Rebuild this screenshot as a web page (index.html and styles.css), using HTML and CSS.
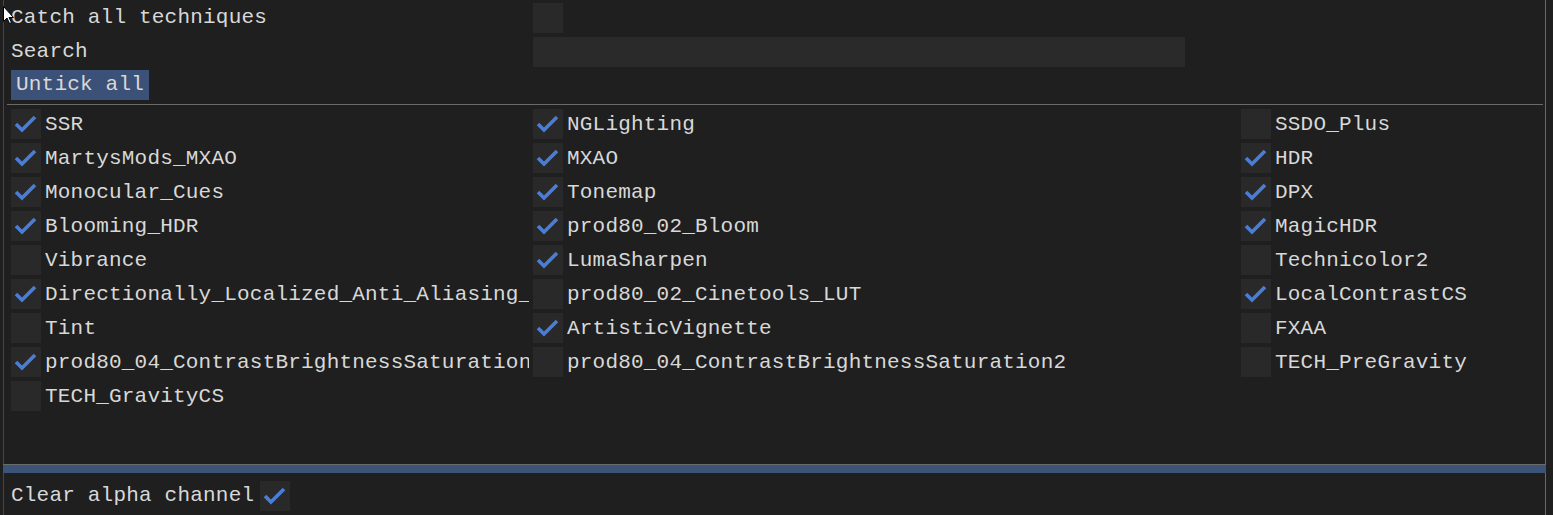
FILE: index.html
```html
<!DOCTYPE html>
<html>
<head>
<meta charset="utf-8">
<link rel="stylesheet" href="styles.css">
</head>
<body>
<div class="window">
  <div class="main">
    <div class="form-row">
      <div class="label">Catch all techniques</div>
      <div class="box"></div>
    </div>
    <div class="form-row">
      <div class="label">Search</div>
      <div class="input"></div>
    </div>
    <div class="form-row">
      <div class="button">Untick all</div>
    </div>
    <div class="separator"></div>
    <div class="list">
      <div class="item"><div class="box on"><svg viewBox="0 0 30 30"><polyline points="5,15 11,21 24,8"/></svg></div><span>SSR</span></div>
      <div class="item"><div class="box on"><svg viewBox="0 0 30 30"><polyline points="5,15 11,21 24,8"/></svg></div><span>NGLighting</span></div>
      <div class="item"><div class="box"></div><span>SSDO_Plus</span></div>

      <div class="item"><div class="box on"><svg viewBox="0 0 30 30"><polyline points="5,15 11,21 24,8"/></svg></div><span>MartysMods_MXAO</span></div>
      <div class="item"><div class="box on"><svg viewBox="0 0 30 30"><polyline points="5,15 11,21 24,8"/></svg></div><span>MXAO</span></div>
      <div class="item"><div class="box on"><svg viewBox="0 0 30 30"><polyline points="5,15 11,21 24,8"/></svg></div><span>HDR</span></div>

      <div class="item"><div class="box on"><svg viewBox="0 0 30 30"><polyline points="5,15 11,21 24,8"/></svg></div><span>Monocular_Cues</span></div>
      <div class="item"><div class="box on"><svg viewBox="0 0 30 30"><polyline points="5,15 11,21 24,8"/></svg></div><span>Tonemap</span></div>
      <div class="item"><div class="box on"><svg viewBox="0 0 30 30"><polyline points="5,15 11,21 24,8"/></svg></div><span>DPX</span></div>

      <div class="item"><div class="box on"><svg viewBox="0 0 30 30"><polyline points="5,15 11,21 24,8"/></svg></div><span>Blooming_HDR</span></div>
      <div class="item"><div class="box on"><svg viewBox="0 0 30 30"><polyline points="5,15 11,21 24,8"/></svg></div><span>prod80_02_Bloom</span></div>
      <div class="item"><div class="box on"><svg viewBox="0 0 30 30"><polyline points="5,15 11,21 24,8"/></svg></div><span>MagicHDR</span></div>

      <div class="item"><div class="box"></div><span>Vibrance</span></div>
      <div class="item"><div class="box on"><svg viewBox="0 0 30 30"><polyline points="5,15 11,21 24,8"/></svg></div><span>LumaSharpen</span></div>
      <div class="item"><div class="box"></div><span>Technicolor2</span></div>

      <div class="item"><div class="box on"><svg viewBox="0 0 30 30"><polyline points="5,15 11,21 24,8"/></svg></div><span>Directionally_Localized_Anti_Aliasing_Plus</span></div>
      <div class="item"><div class="box"></div><span>prod80_02_Cinetools_LUT</span></div>
      <div class="item"><div class="box on"><svg viewBox="0 0 30 30"><polyline points="5,15 11,21 24,8"/></svg></div><span>LocalContrastCS</span></div>

      <div class="item"><div class="box"></div><span>Tint</span></div>
      <div class="item"><div class="box on"><svg viewBox="0 0 30 30"><polyline points="5,15 11,21 24,8"/></svg></div><span>ArtisticVignette</span></div>
      <div class="item"><div class="box"></div><span>FXAA</span></div>

      <div class="item"><div class="box on"><svg viewBox="0 0 30 30"><polyline points="5,15 11,21 24,8"/></svg></div><span>prod80_04_ContrastBrightnessSaturation</span></div>
      <div class="item"><div class="box"></div><span>prod80_04_ContrastBrightnessSaturation2</span></div>
      <div class="item"><div class="box"></div><span>TECH_PreGravity</span></div>

      <div class="item"><div class="box"></div><span>TECH_GravityCS</span></div>
    </div>
  </div>
  <div class="splitter"></div>
  <div class="footer">
    <span class="label-inline">Clear alpha channel</span>
    <div class="box on"><svg viewBox="0 0 30 30"><polyline points="5,15 11,21 24,8"/></svg></div>
  </div>
</div>
<svg class="cursor" viewBox="0 0 13 20" width="13" height="20"><path d="M0.5 0.5 L0.5 15.5 L4 12 L6.5 17.5 L8.5 16.5 L6 11.5 L10.5 11.5 Z" fill="#fff" stroke="#000" stroke-width="1"/></svg>
</body>
</html>
```
FILE: styles.css
```css
html, body {
  margin: 0;
  padding: 0;
  background: #1f1f1f;
  overflow: hidden;
}

body {
  width: 1553px;
  height: 515px;
  position: relative;
  font-family: "Liberation Mono", "DejaVu Sans Mono", monospace;
  font-size: 21px;
  letter-spacing: 0.2px;
  color: #d8d8d8;
}

.window {
  margin-left: 3px;
  width: 1543px;
  height: 515px;
  box-sizing: border-box;
  border-left: 1px solid #464646;
  border-right: 1px solid #6a6a6a;
  display: flex;
  flex-direction: column;
}

.main {
  height: 464px;
  box-sizing: border-box;
  padding: 2px 0 0 7px;
  display: flex;
  flex-direction: column;
  gap: 4px;
}

.form-row {
  display: grid;
  grid-template-columns: 518px 1fr;
  column-gap: 4px;
  height: 30px;
  align-items: center;
}

.label {
  line-height: 30px;
  padding-top: 1px;
  white-space: nowrap;
}

.box {
  width: 30px;
  height: 30px;
  background: #292929;
  flex: none;
}

.box svg {
  display: block;
  width: 30px;
  height: 30px;
}

.box svg polyline {
  fill: none;
  stroke: #4a7ed6;
  stroke-width: 3.6;
  stroke-linecap: butt;
  stroke-linejoin: miter;
}

.input {
  width: 652px;
  height: 30px;
  background: #2a2a2a;
}

.button {
  background: #3c5177;
  height: 30px;
  line-height: 30px;
  padding: 0 5px;
  width: 128px;
  white-space: nowrap;
}

.separator {
  height: 1px;
  background: #6a6a6a;
  margin-left: -4px;
  margin-right: 2px;
}

.list {
  display: grid;
  grid-template-columns: 518px 704px 1fr;
  column-gap: 4px;
  row-gap: 4px;
}

.item {
  display: flex;
  align-items: center;
  gap: 4px;
  height: 30px;
  overflow: hidden;
  white-space: nowrap;
}

.item span {
  line-height: 30px;
  padding-top: 1px;
}

.splitter {
  height: 8px;
  border-top: 1px solid #6a6a6a;
  background: #3d5479;
  margin-left: -1px;
  margin-right: -1px;
}

.footer {
  flex: 1;
  display: flex;
  align-items: flex-start;
  padding: 8px 0 0 7px;
  gap: 6px;
}

.label-inline {
  line-height: 30px;
  white-space: nowrap;
}

.cursor {
  position: absolute;
  left: 3px;
  top: 6px;
}
```
